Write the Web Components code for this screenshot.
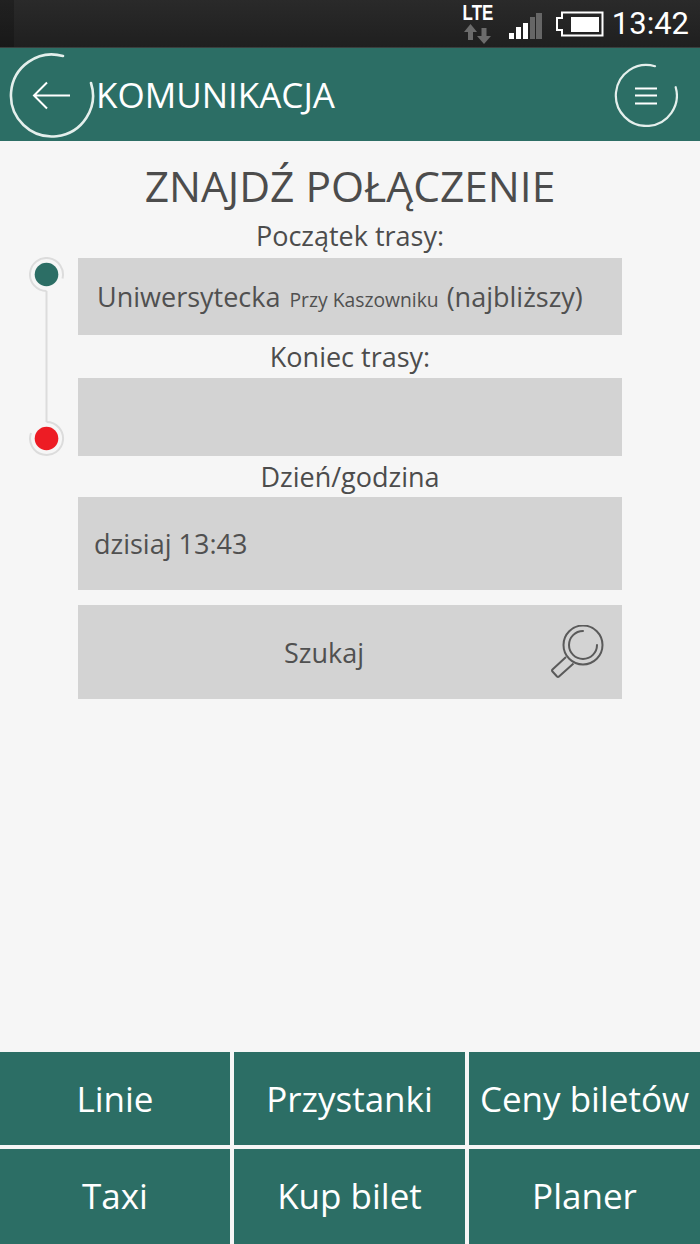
<!DOCTYPE html>
<html lang="pl">
<head>
<meta charset="utf-8">
<title>Komunikacja</title>
<style>
  html, body { margin: 0; padding: 0; height: 100%; }
  body { background: #f6f6f6; font-family: "Open Sans", sans-serif; color: #4c4c4c; }
  app-shell { height: 1244px; }
</style>
</head>
<body>
<app-shell>
  <status-bar slot="status"></status-bar>
  <top-bar slot="top">KOMUNIKACJA</top-bar>
  <route-form></route-form>
  <tile-grid slot="bottom">
    <nav-tile>Linie</nav-tile>
    <nav-tile>Przystanki</nav-tile>
    <nav-tile>Ceny biletów</nav-tile>
    <nav-tile>Taxi</nav-tile>
    <nav-tile>Kup bilet</nav-tile>
    <nav-tile>Planer</nav-tile>
  </tile-grid>
</app-shell>

<script>
function shadow(el, html) {
  el.attachShadow({ mode: "open" });
  el.shadowRoot.innerHTML = html;
}

class AppShell extends HTMLElement {
  constructor() {
    super();
    shadow(this, `
      <style>
        :host { display: flex; flex-direction: column; overflow: hidden; }
        .main { flex: 1; min-height: 0; }
      </style>
      <slot name="status"></slot>
      <slot name="top"></slot>
      <div class="main"><slot></slot></div>
      <slot name="bottom"></slot>
    `);
  }
}

class StatusBar extends HTMLElement {
  constructor() {
    super();
    shadow(this, `
      <style>
        :host {
          display: flex; height: 48px; box-sizing: border-box;
          align-items: center; justify-content: flex-end;
          background:
            linear-gradient(90deg, rgba(0,0,0,.22) 0 14px, transparent 14px),
            linear-gradient(#2a2a2a, #1f1f1f);
          border-bottom: 1px solid #3a3f3e;
          color: #fff;
        }
        .lte { align-self: flex-start; padding-top: 4px; display: flex; flex-direction: column; align-items: center; width: 32px; margin-right: 15px; }
        .lte b { font: 700 22px/18px "Liberation Sans", sans-serif; transform: scaleX(.77); }
        .lte svg { margin-top: 2px; }
        svg { display: block; }
        .bars { margin-right: 14px; margin-top: 5px; }
        .batt { margin-right: 8px; margin-top: 1px; }
        .time { font: 400 31px/34px Roboto, sans-serif; margin-right: 11px; }
      </style>
      <div class="lte">
        <b>LTE</b>
        <svg width="28" height="20" viewBox="0 0 28 20" fill="#6c6c6c">
          <path d="M6.500 0L13 8H9V16H4V8H0z"/>
          <path d="M17.500 4h5v8H27l-7 8-7-8h4.500z"/>
        </svg>
      </div>
      <svg class="bars" width="33" height="26" viewBox="0 0 33 26">
        <rect x="0" y="20" width="5" height="6" fill="#fff"/>
        <rect x="7" y="14" width="5" height="12" fill="#fff"/>
        <rect x="14" y="10" width="5" height="16" fill="#fff"/>
        <rect x="21" y="4" width="5" height="22" fill="#666"/>
        <rect x="27" y="0" width="6" height="26" fill="#666"/>
      </svg>
      <svg class="batt" width="48" height="26" viewBox="0 0 48 26">
        <path d="M6 1.500H46.500V24.500H6V19H1V7H6Z" fill="none" stroke="#fff" stroke-width="2"/>
        <rect x="15" y="6" width="28" height="15" fill="#fff"/>
      </svg>
      <span class="time">13:42</span>
    `);
  }
}

class TopBar extends HTMLElement {
  constructor() {
    super();
    shadow(this, `
      <style>
        :host {
          display: flex; height: 93px; align-items: center;
          background: #2c6e65; color: #fff;
        }
        .back { flex: none; margin-left: 9px; display: block; }
        .title { flex: 1; font: 400 35px/40px "Open Sans", sans-serif; }
        .menu { flex: none; margin-right: 22px; display: block; }
      </style>
      <svg class="back" width="87" height="86" viewBox="0 0 87 86" fill="none" stroke="#fff">
        <path d="M54 4A41 41 0 1 0 82 31" stroke="#e4efec" stroke-width="2.600" stroke-linecap="round"/>
        <path d="M61 43.500H25M38 30.500L25 43.500L38 56.500" stroke-width="2"/>
      </svg>
      <span class="title"><slot></slot></span>
      <svg class="menu" width="64" height="64" viewBox="0 0 64 64" fill="none" stroke="#fff">
        <path d="M41 3.200A30.500 30.500 0 1 0 61.700 24.200" stroke="#e4efec" stroke-width="2.200" stroke-linecap="round"/>
        <path d="M21 25.500H43M21 32.500H43M21 40.500H43" stroke-width="2"/>
      </svg>
    `);
  }
}

class RouteRail extends HTMLElement {
  constructor() {
    super();
    shadow(this, `
      <style>
        :host { display: block; width: 78px; flex: none; }
        svg { display: block; margin-left: 29px; }
      </style>
      <svg width="36" height="200" viewBox="0 0 36 200" fill="none" stroke="#dcdcdc" stroke-width="2">
        <path d="M17.500 34V165"/>
        <path d="M17.500 34A16.500 16.500 0 1 1 33.500 21.500"/>
        <path d="M17.500 165A16.500 16.500 0 1 1 2 176"/>
        <circle cx="17.500" cy="17.500" r="11.800" fill="#2c6e65" stroke="none"/>
        <circle cx="17.500" cy="181.500" r="11.800" fill="#ed1c24" stroke="none"/>
      </svg>
    `);
  }
}

class FieldBox extends HTMLElement {
  constructor() {
    super();
    shadow(this, `
      <style>
        :host { display: block; }
        .label {
          height: var(--label-h, 43px); display: flex; align-items: center; justify-content: center;
          font: 400 27px/34px "Open Sans", sans-serif; color: #4c4c4c;
        }
        .box {
          background: #d3d3d3; height: var(--box-h, 77px); box-sizing: border-box;
          display: flex; align-items: center; padding-left: var(--pad, 19px);
          padding-top: var(--box-pt, 0);
          font: 400 27px/34px "Open Sans", sans-serif; color: #505050; white-space: pre;
        }
      </style>
      <div class="label"></div>
      <div class="box"><div><slot></slot></div></div>
    `);
    this.shadowRoot.querySelector(".label").textContent = this.getAttribute("label") || "";
  }
}

class SearchButton extends HTMLElement {
  constructor() {
    super();
    shadow(this, `
      <style>
        :host {
          display: block; position: relative; margin-top: 15px; height: 94px;
          background: #d3d3d3; color: #505050;
        }
        .t {
          height: 100%; width: 492px; display: flex; align-items: center; justify-content: center;
          font: 400 27px/34px "Open Sans", sans-serif;
          padding-top: 2px; box-sizing: border-box;
        }
        svg { position: absolute; left: 472px; top: 20px; display: block; }
      </style>
      <div class="t"><slot></slot></div>
      <svg width="54" height="54" viewBox="0 0 54 54" fill="none" stroke="#5a5a5a" stroke-width="2">
        <circle cx="33" cy="20" r="19.500"/>
        <path d="M33 6A14 14 0 1 0 47 20" stroke-linecap="round"/>
        <path d="M16 32L2.500 44.500q-1 1 0 2L7 51.500q1 1 2 0L23.500 38.500"/>
      </svg>
    `);
  }
}

class RouteForm extends HTMLElement {
  constructor() {
    super();
    shadow(this, `
      <style>
        :host { display: block; }
        h1 {
          margin: 0; height: 74px; display: flex; align-items: flex-end; justify-content: center;
          font: 400 42.500px/58px "Open Sans", sans-serif; color: #4c4c4c; text-align: center;
        }
        .row { display: flex; padding-right: 78px; }
        .fields { flex: 1; min-width: 0; }
        .fields > :first-child { margin-top: -1px; }
        route-rail { margin-top: 42px; }
        .small { font-size: 19.300px; padding: 0 1px 0 2px; }
        .f2 { --label-h: 43px; --box-h: 78px; }
        .f3 { --label-h: 41px; --box-h: 93px; --pad: 16px; }
      </style>
      <h1>ZNAJDŹ POŁĄCZENIE</h1>
      <div class="row">
        <route-rail></route-rail>
        <div class="fields">
          <field-box label="Początek trasy:" style="--label-h:44px;--box-pt:3px">Uniwersytecka <span class="small">Przy Kaszowniku</span> (najbliższy)</field-box>
          <field-box class="f2" label="Koniec trasy:"></field-box>
          <field-box class="f3" label="Dzień/godzina">dzisiaj 13:43</field-box>
          <search-button>Szukaj</search-button>
        </div>
      </div>
    `);
  }
}

class TileGrid extends HTMLElement {
  constructor() {
    super();
    shadow(this, `
      <style>
        :host {
          display: grid; grid-template-columns: 230px 231px 231px; grid-template-rows: 93px 95px;
          gap: 4px; margin-top: auto;
        }
      </style>
      <slot></slot>
    `);
  }
}

class NavTile extends HTMLElement {
  constructor() {
    super();
    shadow(this, `
      <style>
        :host {
          display: flex; align-items: center; justify-content: center;
          background: #2c6e65; color: #fff; white-space: nowrap;
          font: 400 35px/46px "Open Sans", sans-serif;
        }
        :host(:nth-child(n+4)) { padding-bottom: 2px; box-sizing: border-box; }
      </style>
      <slot></slot>
    `);
  }
}

customElements.define("app-shell", AppShell);
customElements.define("status-bar", StatusBar);
customElements.define("top-bar", TopBar);
customElements.define("route-rail", RouteRail);
customElements.define("field-box", FieldBox);
customElements.define("search-button", SearchButton);
customElements.define("route-form", RouteForm);
customElements.define("tile-grid", TileGrid);
customElements.define("nav-tile", NavTile);
</script>
</body>
</html>
